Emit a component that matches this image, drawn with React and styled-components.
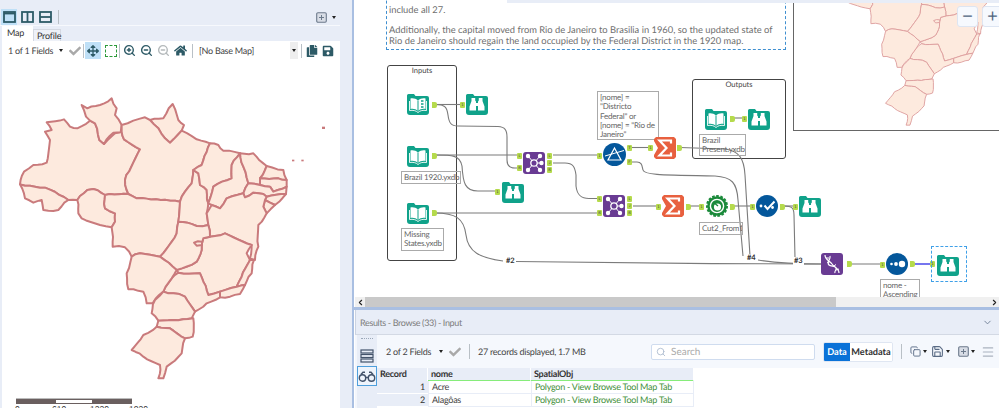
import React from "react";
import styled, { createGlobalStyle } from "styled-components";
import { FaArrowsAlt, FaHome, FaCopy, FaSave, FaCheck } from "react-icons/fa";
import { ZoomIn, ZoomOut, Search, ChevronDown, ChevronLeft, ChevronRight, Copy, Save, Menu } from "lucide-react";

const UI_FONT = `"Lato", "Noto Sans", "Liberation Sans", sans-serif`;
const CANVAS_X = 355;
const PANEL = "#e8edf7";
const ICON = "#2d5a66";
const TEAL = "#10a28a";
const PURPLE = "#693b93";
const BLUE = "#04579b";
const ORANGE = "#e8603f";

const Global = createGlobalStyle`
  html, body { margin: 0; padding: 0; background: #fff; overflow: hidden; }
  body { font-family: ${UI_FONT}; text-rendering: geometricPrecision; }
`;

const Page = styled.div`
  width: 999px;
  height: 408px;
  display: grid;
  grid-template-columns: 340px 12px 2px 1fr;
  overflow: hidden;
`;

/* left panel */
const LeftPanel = styled.div`
  background: ${PANEL};
  display: flex;
  flex-direction: column;
  height: 408px;
`;
const LayoutBar = styled.div`
  height: 26px;
  box-sizing: border-box;
  padding: 9px 3px 0 1px;
  display: flex;
  align-items: center;
  gap: 2px;
  border-bottom: 1px solid #f7f9fd;
`;
const LayoutButton = styled.div`
  width: 16px;
  height: 16px;
  display: flex;
  align-items: center;
  justify-content: center;
  background: ${p => (p.$active ? "#bfe0f7" : "transparent")};
`;
const BarSep = styled.div`
  width: 1px;
  height: ${p => p.$h || 14}px;
  background: #b9c0c6;
  margin: 0 ${p => p.$m ?? 3}px;
`;
const Spacer = styled.div`
  flex: 1;
`;
const Tabs = styled.div`
  height: 15px;
  display: flex;
  align-items: flex-end;
  padding-left: 2px;
`;
const Tab = styled.div`
  font-size: 9px;
  letter-spacing: -0.2px;
  color: #333;
  line-height: 1;
  box-sizing: border-box;
  height: ${p => (p.$active ? 15 : 12)}px;
  width: ${p => (p.$active ? 31 : 28)}px;
  padding: ${p => (p.$active ? "2px 0 0 5px" : "1px 0 0 3px")};
  background: ${p => (p.$active ? "#fff" : "#eef1f8")};
  border: ${p => (p.$active ? "none" : "1px solid #d4d9e2")};
  border-bottom: none;
`;
const MapPane = styled.div`
  flex: 1;
  margin-left: 2px;
  background: #fff;
  position: relative;
  overflow: hidden;
  min-height: 0;
`;
const MapBar = styled.div`
  height: 19px;
  display: flex;
  align-items: center;
  padding-left: 6px;
  font-size: 9px;
  letter-spacing: -0.25px;
  color: #444;
`;
const MapBarText = styled.span`
  white-space: nowrap;
  width: ${p => p.$w}px;
  margin-left: ${p => p.$left || 0}px;
`;
const Caret = styled.span`
  display: inline-block;
  width: 0;
  height: 0;
  border-left: 2.5px solid transparent;
  border-right: 2.5px solid transparent;
  border-top: 3px solid ${p => p.$color || "#222"};
  margin: ${p => p.$m || "0 5px"};
`;
const ToolButton = styled.div`
  width: ${p => p.$w || 15}px;
  height: 17px;
  display: flex;
  align-items: center;
  justify-content: center;
  margin-right: ${p => p.$gap ?? 1}px;
  background: ${p => (p.$active ? "#bfe0f7" : "transparent")};
`;
const DashBox = styled.div`
  width: 10px;
  height: 10px;
  border: 1.5px dashed #2c9a3a;
`;
const SelectTail = styled.div`
  width: 8px;
  height: 17px;
  background: #eee;
  display: flex;
  align-items: center;
  justify-content: center;
`;
const BigMap = styled.svg`
  display: block;
  margin: 30px 0 0 -2px;
`;
const ScaleBar = styled.div`
  position: absolute;
  left: 14px;
  top: 357px;
  width: 116px;
  height: 5px;
  display: grid;
  grid-template-columns: 1fr 1fr 1fr;
  border-top: 1px solid #bbb;
`;
const ScaleStep = styled.div`
  background: ${p => (p.$dark ? "#6a5f5f" : "#fff")};
  border: 1px solid #6a5f5f;
`;
const ScaleLabels = styled.div`
  position: absolute;
  left: 13px;
  top: 363px;
  width: 145px;
  font-family: "Liberation Sans", sans-serif;
  font-size: 8.5px;
  color: #333;
  display: grid;
  grid-template-columns: 37px 38px 39px 1fr;
`;

const Splitter = styled.div`
  background: ${PANEL};
`;
const SplitLine = styled.div`
  background: #a9bfe2;
`;

/* right side */
const RightSide = styled.div`
  display: flex;
  flex-direction: column;
  height: 408px;
  min-width: 0;
  padding-left: 1px;
`;
const Canvas = styled.div`
  position: relative;
  height: 297px;
  background: #fff;
  overflow: hidden;
`;
const Wires = styled.svg`
  position: absolute;
  left: 0;
  top: 0;
`;
const TopStrip = styled.div`
  position: absolute;
  left: ${507 - CANVAS_X}px;
  right: 0;
  top: 0;
  height: 3px;
  background: ${PANEL};
  z-index: 5;
`;
const NoteBox = styled.div`
  position: absolute;
  left: ${386 - CANVAS_X}px;
  top: -20px;
  width: 400px;
  height: 70px;
  box-sizing: border-box;
  border: 1px dashed #3f8fd0;
  background: #fff;
  padding: 23px 0 0 2px;
  font-size: 9.35px;
  line-height: 11px;
  color: #6f6f6f;
  white-space: nowrap;
`;
const NotePara = styled.p`
  margin: 0 0 9px;
`;
const MiniMap = styled.div`
  position: absolute;
  left: ${793 - CANVAS_X}px;
  top: -2px;
  width: 220px;
  height: 133px;
  box-sizing: border-box;
  border: 1.5px solid #666;
  background: #fff;
  overflow: hidden;
`;
const MiniSvg = styled.svg`
  position: absolute;
  left: -10px;
  top: -96px;
`;
const MapZoomBtn = styled.div`
  position: absolute;
  left: ${p => p.$x - CANVAS_X}px;
  top: 6px;
  width: 21px;
  height: 21px;
  box-sizing: border-box;
  border-radius: 3px;
  background: #f6f9fe;
  border: 1px solid #dde5f2;
  color: #50657f;
  font-family: "Liberation Sans", sans-serif;
  font-size: 18px;
  line-height: 18px;
  text-align: center;
  z-index: 4;
`;
const Container = styled.div`
  position: absolute;
  left: ${p => p.$x - CANVAS_X}px;
  top: ${p => p.$y}px;
  width: ${p => p.$w}px;
  height: ${p => p.$h}px;
  box-sizing: border-box;
  border: 1.5px solid #444;
  border-radius: 3px;
  font-size: 7.5px;
  color: #444;
  text-align: center;
  line-height: 10px;
`;
const Comment = styled.div`
  position: absolute;
  left: ${p => p.$x - CANVAS_X}px;
  top: ${p => p.$y}px;
  width: ${p => p.$w}px;
  height: ${p => p.$h}px;
  box-sizing: border-box;
  border: 1px solid #aaa;
  padding: 1px 2px;
  font-size: 8px;
  letter-spacing: -0.2px;
  line-height: 9.3px;
  color: #666;
  white-space: nowrap;
  overflow: hidden;
`;
const Tool = styled.svg`
  position: absolute;
  left: ${p => p.$x - CANVAS_X}px;
  top: ${p => p.$y}px;
`;
const Anchor = styled.div`
  position: absolute;
  left: ${p => p.$x - CANVAS_X}px;
  top: ${p => p.$y}px;
  width: 5px;
  height: 6px;
  background: #b5da4c;
  border-radius: ${p => (p.$out ? "0 2px 2px 0" : "1px")};
  font-size: 4px;
  line-height: 6px;
  text-align: center;
  color: #444;
  overflow: hidden;
`;
const WireLabel = styled.div`
  position: absolute;
  left: ${p => p.$x - CANVAS_X}px;
  top: ${p => p.$y}px;
  font-size: 7.5px;
  font-weight: 700;
  color: #333;
  background: #fff;
  line-height: 8px;
  padding: 0 1px;
`;
const Selection = styled.div`
  position: absolute;
  left: ${931 - CANVAS_X}px;
  top: 246px;
  width: 36px;
  height: 36px;
  box-sizing: border-box;
  border: 1px dashed #3fa0e8;
`;
const Scroller = styled.div`
  height: 10px;
  display: grid;
  grid-template-columns: 10px 471px 1fr 10px;
  background: #f0f0f0;
`;
const ScrollEnd = styled.div`
  display: flex;
  align-items: center;
  justify-content: center;
  color: #222;
`;
const ScrollThumb = styled.div`
  background: #c9c9c9;
`;
const BlueRule = styled.div`
  height: 3px;
  margin-left: -1px;
  background: #a9bfe2;
`;

/* results */
const Results = styled.div`
  flex: 1;
  background: ${PANEL};
  display: flex;
  flex-direction: column;
  min-height: 0;
  margin-left: -1px;
  border-left: 1px solid #fff;
`;
const ResultsHead = styled.div`
  height: 24px;
  display: flex;
  align-items: center;
  justify-content: space-between;
  padding: 0 6px 0 4px;
  font-size: 9px;
  letter-spacing: -0.35px;
  color: #7c7c7c;
  border-bottom: 1px solid #d3d9e4;
  border-left: 1px solid #cbd3e2;
  flex: none;
`;
const ResultsBody = styled.div`
  flex: 1;
  background: #fff;
  display: flex;
  min-height: 0;
`;
const SideRail = styled.div`
  width: 22px;
  flex: none;
  background: #f3f6fc;
  padding-left: 2px;
  box-sizing: border-box;
  display: flex;
  flex-direction: column;
  align-items: stretch;
`;
const RailInner = styled.div`
  width: 20px;
  background: ${PANEL};
  flex: 1;
  display: flex;
  flex-direction: column;
  align-items: center;
`;
const Grip = styled.div`
  height: 6px;
  margin-top: 3px;
  width: 12px;
  border-top: 1px dotted #9aa7b8;
`;
const RailButton = styled.div`
  width: 20px;
  height: ${p => (p.$selected ? 20 : 21)}px;
  box-sizing: border-box;
  display: flex;
  align-items: center;
  justify-content: center;
  border: ${p => (p.$selected ? "1px solid #4f9fdc" : "none")};
  background: ${p => (p.$selected ? "#eef4fc" : "transparent")};
`;
const ResultsMain = styled.div`
  flex: 1;
  min-width: 0;
  display: flex;
  flex-direction: column;
`;
const ResultsBar = styled.div`
  height: 33px;
  flex: none;
  background: #f5f8fd;
  display: flex;
  align-items: center;
  padding-left: 9px;
  font-size: 9px;
  letter-spacing: -0.25px;
  color: #444;
`;
const BarLabel = styled.span`
  white-space: nowrap;
  width: ${p => p.$w}px;
`;
const SearchBox = styled.div`
  width: 164px;
  height: 16px;
  box-sizing: border-box;
  display: flex;
  align-items: center;
  gap: 5px;
  padding-left: 4px;
  margin-right: 8px;
  background: #fff;
  border: 1px solid #cfdcef;
  border-radius: 2px;
  color: #aaa;
  font-size: 10px;
  letter-spacing: 0;
`;
const ToggleGroup = styled.div`
  display: flex;
  height: 18px;
  border-radius: 2px;
  overflow: hidden;
  background: #fff;
  border: 1px solid #dfe6f2;
`;
const Toggle = styled.div`
  width: ${p => p.$w}px;
  display: flex;
  align-items: center;
  justify-content: center;
  font-size: 9.2px;
  letter-spacing: 0;
  font-weight: 700;
  background: ${p => (p.$on ? "#0a72d8" : "#fff")};
  color: ${p => (p.$on ? "#fff" : "#333")};
`;
const BarIcons = styled.div`
  display: flex;
  align-items: center;
  color: #5a6b85;
`;
const DataGrid = styled.div`
  display: grid;
  grid-template-columns: 51px 103px 163px;
  grid-auto-rows: 13px;
  font-size: 9px;
  letter-spacing: -0.25px;
  line-height: 12px;
  width: 317px;
`;
const HeadCell = styled.div`
  background: ${PANEL};
  font-weight: 700;
  color: #333;
  padding-left: 3px;
  height: 14px;
  box-sizing: border-box;
  border-right: 1px solid #fff;
  border-bottom: ${p => (p.$marked ? "2px solid #86ec7a" : "none")};
`;
const RowNum = styled.div`
  background: ${PANEL};
  text-align: right;
  padding-right: 3px;
  color: #333;
  border-bottom: 1px solid #fff;
`;
const Cell = styled.div`
  background: #fff;
  padding-left: 3px;
  color: ${p => (p.$spatial ? "#3f8f3a" : "#444")};
  box-sizing: border-box;
  border-left: 1px solid ${PANEL};
  border-bottom: 1px solid ${PANEL};
  border-right: ${p => (p.$spatial ? `1px solid ${PANEL}` : "none")};
  white-space: nowrap;
  overflow: hidden;
`;

/* Map, traced by state, in the 1035x954 space of the left pane */
const STATES = [
  "140,97 192,88 210,110 232,115 270,92 285,100 298,150 312,162 345,130 365,125 372,148 420,178 375,270 385,312 315,315 280,297 262,300 232,330 205,330 135,293 60,283 72,245 100,225 140,218 150,150 135,125 155,120",
  "245,45 262,55 300,45 335,25 350,55 345,75 365,105 362,127 340,128 312,162 298,150 285,100 270,92 258,80",
  "450,90 490,85 518,42 535,90 552,105 545,122 510,158 495,145 475,115",
  "365,105 400,92 435,82 450,90 475,115 495,145 510,158 545,122 590,148 630,160 605,225 580,240 575,280 555,305 540,335 410,325 385,312 375,270 420,178 372,148 365,125",
  "60,283 135,293 205,330 175,360 130,360 125,330 100,338 75,325",
  "232,330 262,300 280,297 315,315 315,355 345,370 345,395 335,412 300,405 245,385 235,370",
  "315,315 385,312 410,325 540,335 535,395 530,430 480,500 465,497 420,490 395,500 375,472 338,470 335,412 345,395 345,370 315,355",
  "580,240 595,250 600,285 620,300 625,340 620,370 625,405 590,408 562,398 535,395 540,335 555,305 575,280",
  "630,160 655,165 670,182 720,190 695,225 695,265 640,290 632,320 625,340 620,300 600,285 595,250 580,240 605,225",
  "720,190 730,230 745,280 730,310 680,325 660,355 635,345 625,340 632,320 640,290 695,265 695,225",
  "720,190 760,190 800,228 780,265 780,285 745,280 730,230",
  "800,228 850,240 860,270 835,265 780,265",
  "780,265 835,265 860,270 860,290 820,305 810,290 780,285",
  "745,280 780,285 810,290 820,305 860,290 858,312 800,320 790,312 760,308 735,322 730,310",
  "800,320 858,312 825,345 795,330",
  "795,330 825,345 800,370 790,350",
  "730,310 735,322 760,308 790,312 800,320 795,330 790,350 800,370 775,405 775,470 765,510 750,505 755,465 675,430 630,440 625,405 620,370 635,345 660,355 680,325",
  "630,440 675,430 755,465 740,490 750,510 725,560 710,590 660,605 625,615 610,575 600,550 535,548 530,540 590,515 605,480 610,445",
  "535,395 562,398 590,408 625,405 630,440 610,445 605,480 590,515 530,540 480,500 530,430",
  "582,458 606,455 606,465 590,467",
  "750,510 762,510 755,550 735,585 710,590 725,560",
  "710,590 735,585 720,612 690,620 660,622 660,605",
  "535,548 600,550 610,575 625,615 660,605 660,622 620,640 585,665 555,620 520,610 490,605 515,565",
  "395,500 420,490 465,497 480,500 530,540 515,565 490,605 458,640 440,640 430,605 385,598 380,550",
  "490,605 520,610 555,620 585,665 575,685 520,690 475,692 455,670 465,630",
  "475,692 520,690 580,685 578,740 555,745 510,715 470,710",
  "470,710 510,715 555,745 545,790 500,830 490,865 475,865 480,825 430,800 395,780 430,735"
];

// adds small wobble to each border, the same on both states that share it
const roughen = points => {
  const pts = points.split(" ").map(p => p.split(",").map(Number));
  const out = [];
  pts.forEach((a, i) => {
    const b = pts[(i + 1) % pts.length];
    const forward = a[0] < b[0] || (a[0] === b[0] && a[1] < b[1]);
    const [s, e] = forward ? [a, b] : [b, a];
    const len = Math.hypot(e[0] - s[0], e[1] - s[1]);
    const n = Math.max(1, Math.round(len / 15));
    const mids = [];
    for (let k = 1; k < n; k++) {
      const r = (Math.sin(s[0] * 12.9898 + e[1] * 78.233 + k * 37.7) * 43758.5453) % 1;
      const x = s[0] + ((e[0] - s[0]) * k) / n - ((e[1] - s[1]) / len) * r * 3;
      const y = s[1] + ((e[1] - s[1]) * k) / n + ((e[0] - s[0]) / len) * r * 3;
      mids.push(`${x.toFixed(1)},${y.toFixed(1)}`);
    }
    out.push(a.join(","), ...(forward ? mids : mids.reverse()));
  });
  return out.join(" ");
};
const ROUGH_STATES = STATES.map(roughen);

const MapShapes = ({ stroke, width }) => (
  <g fill="#fdeade" stroke={stroke} strokeWidth={width} strokeLinejoin="round">
    {ROUGH_STATES.map((points, i) => (
      <polygon key={i} points={points} />
    ))}
  </g>
);

const WIRES = [
  "M435 104.5H460",
  "M435 104.5C446 104.5 447 108 448 115C449 123 451 126 458 126L498 126.5C505 127 507 130 507 137L507 160C507 166 510 168 515 168H520",
  "M435 155H520",
  "M435 155C452 155 460 155 462 166C463 183 465 191 478 191H495",
  "M435 213H598",
  "M435 213C455 213 464 218 466 235C468 252 480 258 503 261",
  "M516 261.5C600 263 720 264 821 264",
  "M553 155H598",
  "M553 163H565C573 163 575 167 576 175L576 186C577 195 581 198.5 589 198.5H598",
  "M630 147.5H650",
  "M630 162H637C642 162 642 166 643 170C644 175 660 175 715 176C732 177 737 183 738 200L743 256",
  "M680 147.5L725 149C739 151 744 158 745 175L750 256",
  "M758 260C770 262 790 264 821 264",
  "M633 206H657",
  "M688 206H700",
  "M731 206H750",
  "M782 206H795",
  "M784 206C792 206 794 208 794 215L795 258",
  "M847 264H880",
  "M733 118H745"
];

const Book = ({ lines }) => (
  <>
    <path d="M0 2.5Q0 1 1.5 1H7L8.5 3H20Q22 3 22 5V19Q22 22 19 22H3Q0 22 0 19Z" fill={TEAL} />
    <path d="M11 7.5C9 5.5 6 5 3.5 5.5V16C6 15.5 9 16 11 18C13 16 16 15.5 18.5 16V5.5C16 5 13 5.5 11 7.5Z" fill="#fff" />
    <path d="M11 7.5V18" stroke={TEAL} strokeWidth="1" />
    <path d="M2.5 8V17.5C6 17 9 17.5 11 19.5C13 17.5 16 17 19.5 17.5V8" fill="none" stroke="#fff" strokeWidth=".9" />
    {lines && <path d="M14 8h2.5M14 11h2.5M14 14h2.5" stroke={TEAL} strokeWidth="1.4" />}
  </>
);

const Browse = () => (
  <>
    <path d="M0 2.5Q0 1 1.5 1H7L8.5 3H20Q22 3 22 5V19Q22 22 19 22H3Q0 22 0 19Z" fill={TEAL} />
    <path d="M5.5 5H9.2V7.5L10 8.5V17.5H3.5V13.5L5.5 8ZM12.8 5H16.5V8L18.5 13.5V17.5H12V8.5L12.8 7.5Z" fill="#fff" />
    <path d="M10 10H12V13H10Z" fill="#fff" />
  </>
);

const Join = () => (
  <>
    <rect width="22" height="22" rx="3" fill={PURPLE} />
    <path d="M5 4L11 11L17 4M11 11H18.5M5 18L11 11L17 18" stroke="#fff" strokeWidth="1" fill="none" />
    <circle cx="11" cy="11" r="3.2" fill={PURPLE} stroke="#fff" strokeWidth="1.3" />
    {[[5, 4, 2.2], [17, 4, 2.2], [18.5, 11, 2.2], [5, 18, 2.2], [17, 18, 2.2]].map(([cx, cy, r]) => (
      <circle key={`${cx}-${cy}`} cx={cx} cy={cy} r={r} fill="#fff" />
    ))}
  </>
);

const Filter = () => (
  <>
    <circle cx="11.5" cy="11.5" r="11.5" fill={BLUE} />
    <path d="M11.5 5L18 17H5Z" fill="none" stroke="#fff" strokeWidth="1.2" />
    <path d="M2 13L21 7.5" stroke="#fff" strokeWidth="1" />
  </>
);

const Sigma = () => (
  <>
    <polygon points="2,0 20,0 22,2 22,20 20,22 2,22 0,20 0,18 4,11 0,4 0,2" fill={ORANGE} />
    <path d="M17 6.5V3.5H5.5L12.5 11L5.5 18.5H17V15.5" fill="none" stroke="#fff" strokeWidth="2.2" />
  </>
);

const Badge = () => (
  <>
    <circle cx="11" cy="11" r="9.8" fill="#1b8a3b" stroke="#1b8a3b" strokeWidth="2.4" strokeDasharray="2.6 1.5" />
    <circle cx="11" cy="11" r="6.6" fill="#1b8a3b" stroke="#fff" strokeWidth="1.4" />
    <circle cx="11.5" cy="12" r="3.6" fill="#fff" />
    <path d="M7 7L12 11" stroke="#1b8a3b" strokeWidth="1.4" />
  </>
);

const Dotted = ({ check }) => (
  <>
    <circle cx="11" cy="11" r="11" fill={BLUE} />
    {check ? (
      <>
        <circle cx="5" cy="11" r="1.4" fill="#fff" />
        <path d="M8.5 10.5L11.5 14L18.5 6.5" fill="none" stroke="#fff" strokeWidth="2" />
        <circle cx="16.5" cy="12.5" r="1.4" fill="#fff" />
      </>
    ) : (
      <>
        <circle cx="5.5" cy="11" r="1.3" fill="#fff" />
        <circle cx="10" cy="11" r="1.9" fill="#fff" />
        <circle cx="16" cy="11" r="3.2" fill="#fff" />
      </>
    )}
  </>
);

const Dna = () => (
  <>
    <rect width="22" height="22" rx="3" fill={PURPLE} />
    <path d="M4 2C4 7 9 8 11 11C13 14 18 15 18 20M9 3C10 7 5 9 8 12C10 14 14 12 15 15C16 17 13 18 14 20" fill="none" stroke="#fff" strokeWidth="1.2" />
    <path d="M5 5L8 5M6 9.5L9 8.5M13 13L15 11.5M15 17L18 16" stroke="#fff" strokeWidth="1" />
  </>
);

const ICONS = { book: Book, browse: Browse, join: Join, filter: Filter, sigma: Sigma, badge: Badge, dotted: Dotted, dna: Dna };

const TOOLS = [
  { kind: "book", x: 407, y: 93, lines: true },
  { kind: "browse", x: 466, y: 93 },
  { kind: "book", x: 407, y: 145 },
  { kind: "book", x: 407, y: 202 },
  { kind: "join", x: 523, y: 152 },
  { kind: "browse", x: 502, y: 181 },
  { kind: "filter", x: 603, y: 143, size: 23 },
  { kind: "sigma", x: 654, y: 137 },
  { kind: "join", x: 603, y: 195 },
  { kind: "sigma", x: 662, y: 195 },
  { kind: "badge", x: 706, y: 195 },
  { kind: "dotted", x: 756, y: 195, check: true },
  { kind: "browse", x: 799, y: 195 },
  { kind: "book", x: 705, y: 108 },
  { kind: "browse", x: 748, y: 108 },
  { kind: "dna", x: 821, y: 253 },
  { kind: "dotted", x: 886, y: 253 },
  { kind: "browse", x: 937, y: 254 }
];

const ANCHORS = [
  { x: 432, y: 102, out: 1 }, { x: 460, y: 102, t: "1" },
  { x: 432, y: 153, out: 1 }, { x: 432, y: 210, out: 1 },
  { x: 495, y: 189, t: "1" },
  { x: 517, y: 153, t: "L" }, { x: 517, y: 165, t: "R" },
  { x: 547, y: 153, t: "L" }, { x: 547, y: 160, t: "J" }, { x: 547, y: 167, t: "R" },
  { x: 597, y: 153, t: "1" },
  { x: 627, y: 145, t: "T" }, { x: 627, y: 159, t: "F" },
  { x: 648, y: 145, t: "1" }, { x: 677, y: 145, out: 1 },
  { x: 597, y: 196, t: "L" }, { x: 597, y: 210, t: "R" },
  { x: 627, y: 196, t: "L" }, { x: 627, y: 203, t: "J" }, { x: 627, y: 210, t: "R" },
  { x: 656, y: 204, t: "1" }, { x: 686, y: 204, out: 1 },
  { x: 699, y: 204, t: "1" }, { x: 730, y: 204, out: 1 },
  { x: 750, y: 204, t: "1" }, { x: 780, y: 204, out: 1 },
  { x: 793, y: 204, t: "1" },
  { x: 730, y: 116, out: 1 }, { x: 742, y: 116, t: "1" },
  { x: 847, y: 261, out: 1 }, { x: 880, y: 262, t: "1" },
  { x: 910, y: 261, out: 1 }, { x: 930, y: 261, t: "1" }
];

const PanelIcon = ({ split }) => (
  <svg width="13" height="12" viewBox="0 0 13 12" fill="none" stroke={ICON} strokeWidth="1.8">
    <rect x="1" y="1" width="11" height="10" />
    {split === "v" && <path d="M6.5 1V11" />}
    {split === "h" && <path d="M1 6H12" />}
    {split === "none" && <path d="M1 2.5H12" />}
  </svg>
);

const PlusBox = () => (
  <svg width="11" height="11" viewBox="0 0 11 11">
    <rect x=".7" y=".7" width="9.6" height="9.6" rx="1.2" fill="#d8dde6" stroke="#6c7a8c" strokeWidth="1.1" />
    <path d="M5.5 3V8M3 5.5H8" stroke="#6c7a8c" strokeWidth="1" />
  </svg>
);

const Binoculars = () => (
  <svg width="18" height="11" viewBox="0 0 18 11" fill="none" stroke="#42526a" strokeWidth="1.4">
    <circle cx="4.5" cy="7" r="3.2" />
    <circle cx="13.5" cy="7" r="3.2" />
    <path d="M7.7 6.5H10.3M3 3.5L5 1.2H7M15 3.5L13 1.2H11" />
  </svg>
);

const RowsIcon = () => (
  <svg width="14" height="14" viewBox="0 0 14 14" fill="none" stroke="#42526a" strokeWidth="1.2">
    <rect x="1" y="1" width="12" height="3" />
    <rect x="1" y="5.5" width="12" height="3" />
    <rect x="1" y="10" width="12" height="3" />
  </svg>
);

export default function App() {
  return (
    <Page>
      <Global />
      <LeftPanel>
        <LayoutBar>
          <LayoutButton $active><PanelIcon split="none" /></LayoutButton>
          <LayoutButton><PanelIcon split="v" /></LayoutButton>
          <LayoutButton><PanelIcon split="h" /></LayoutButton>
          <BarSep />
          <Spacer />
          <PlusBox />
          <Caret $m="0 1px 0 3px" />
        </LayoutBar>
        <Tabs>
          <Tab $active>Map</Tab>
          <Tab>Profile</Tab>
        </Tabs>
        <MapPane>
          <MapBar>
            <MapBarText $w={46}>1 of 1 Fields</MapBarText>
            <Caret $m="0 5px 0 5px" />
            <ToolButton $w={14} $gap={0}><FaCheck size={12} color="#a9a9a9" /></ToolButton>
            <BarSep $m={1} />
            <ToolButton $active $w={16} $gap={3}><FaArrowsAlt size={12} color={ICON} /></ToolButton>
            <ToolButton $w={13} $gap={0}><DashBox /></ToolButton>
            <BarSep $m={2} />
            <ToolButton $gap={2}><ZoomIn size={13} strokeWidth={2.6} color={ICON} /></ToolButton>
            <ToolButton $gap={2}><ZoomOut size={13} strokeWidth={2.6} color={ICON} /></ToolButton>
            <ToolButton $gap={2}><ZoomOut size={13} strokeWidth={2.6} color="#b4b9bb" /></ToolButton>
            <ToolButton $gap={1}><FaHome size={13} color={ICON} /></ToolButton>
            <BarSep $m={3} />
            <MapBarText $w={91} $left={3}>[No Base Map]</MapBarText>
            <SelectTail><Caret $m="0" /></SelectTail>
            <BarSep $m={3} />
            <ToolButton $w={13} $gap={3}><FaCopy size={12} color={ICON} /></ToolButton>
            <ToolButton $w={13} $gap={0}><FaSave size={12} color={ICON} /></ToolButton>
          </MapBar>
          <BigMap width="345" height="318" viewBox="0 0 1035 954">
            <MapShapes stroke="#c97a7c" width={6} />
            <g fill="#c97a7c">
              <rect x="966" y="110" width="9" height="7" />
              <rect x="876" y="209" width="7" height="5" />
              <rect x="904" y="209" width="7" height="5" />
            </g>
          </BigMap>
          <ScaleBar>
            <ScaleStep $dark />
            <ScaleStep />
            <ScaleStep $dark />
          </ScaleBar>
          <ScaleLabels>
            <span>0</span>
            <span>610</span>
            <span>1220</span>
            <span>1830 km</span>
          </ScaleLabels>
        </MapPane>
      </LeftPanel>
      <Splitter />
      <SplitLine />
      <RightSide>
        <Canvas>
          <TopStrip />
          <NoteBox>
            <NotePara>include all 27.</NotePara>
            <NotePara>
              Additionally, the capital moved from Rio de Janeiro to Brasilia in 1960, so the updated state of
              <br />
              Rio de Janeiro should regain the land occupied by the Federal District in the 1920 map.
            </NotePara>
          </NoteBox>
          <MiniMap>
            <MiniSvg width="266" height="245" viewBox="0 0 1035 954">
              <MapShapes stroke="#dc9c9c" width={3.5} />
            </MiniSvg>
          </MiniMap>
          <MapZoomBtn $x={957}>−</MapZoomBtn>
          <MapZoomBtn $x={982}>+</MapZoomBtn>
          <Container $x={387} $y={65} $w={70} $h={196}>Inputs</Container>
          <Container $x={692} $y={79} $w={94} $h={80}>Outputs</Container>
          <Wires width="644" height="297" viewBox={`${CANVAS_X} 0 644 297`} fill="none">
            {WIRES.map((d, i) => (
              <path key={i} d={d} stroke="#7b7b7b" strokeWidth="1.1" />
            ))}
            <path d="M914 264H931" stroke="#3b3be8" strokeWidth="1.4" />
          </Wires>
          <Comment $x={401} $y={171} $w={60} $h={13}>Brazil 1920.yxdb</Comment>
          <Comment $x={401} $y={228} $w={43} $h={23}>Missing<br />States.yxdb</Comment>
          <Comment $x={597} $y={91} $w={62} $h={49}>
            [nome] =<br />"Districto<br />Federal" or<br />[nome] = "Rio de<br />Janeiro"
          </Comment>
          <Comment $x={699} $y={134} $w={47} $h={22}>Brazil<br />Present.yxdb</Comment>
          <Comment $x={699} $y={222} $w={44} $h={13}>Cut2_From1</Comment>
          <Comment $x={880} $y={279} $w={40} $h={24}>nome -<br />Ascending</Comment>
          {TOOLS.map(({ kind, x, y, size = 22, ...rest }) => {
            const Icon = ICONS[kind];
            return (
              <Tool key={`${kind}-${x}-${y}`} $x={x} $y={y} width={size} height={size} viewBox={`0 0 ${size} ${size}`}>
                <Icon {...rest} />
              </Tool>
            );
          })}
          {ANCHORS.map(({ x, y, t, out }) => (
            <Anchor key={`${x}-${y}`} $x={x} $y={y} $out={out}>{t}</Anchor>
          ))}
          <WireLabel $x={505} $y={257}>#2</WireLabel>
          <WireLabel $x={746} $y={254}>#4</WireLabel>
          <WireLabel $x={793} $y={257}>#3</WireLabel>
          <Selection />
        </Canvas>
        <Scroller>
          <ScrollEnd><ChevronLeft size={9} strokeWidth={3} /></ScrollEnd>
          <ScrollThumb />
          <div />
          <ScrollEnd><ChevronRight size={9} strokeWidth={3} /></ScrollEnd>
        </Scroller>
        <BlueRule />
        <Results>
          <ResultsHead>
            <span>Results - Browse (33) - Input</span>
            <ChevronDown size={11} color="#6f7f95" />
          </ResultsHead>
          <ResultsBody>
            <SideRail>
              <RailInner>
                <Grip />
                <RailButton><RowsIcon /></RailButton>
                <RailButton $selected><Binoculars /></RailButton>
              </RailInner>
            </SideRail>
            <ResultsMain>
              <ResultsBar>
                <BarLabel $w={47}>2 of 2 Fields</BarLabel>
                <Caret $m="0 6px 0 6px" />
                <FaCheck size={12} color="#a9a9a9" />
                <BarSep $m={8} $h={15} />
                <BarLabel $w={173}>27 records displayed, 1.7 MB</BarLabel>
                <SearchBox>
                  <Search size={10} color="#a8b8cc" />
                  Search
                </SearchBox>
                <ToggleGroup>
                  <Toggle $on $w={26}>Data</Toggle>
                  <Toggle $w={42}>Metadata</Toggle>
                </ToggleGroup>
                <BarSep $m={8} $h={15} />
                <BarIcons>
                  <Copy size={11} />
                  <Caret $m="0 4px 0 2px" />
                  <Save size={13} />
                  <Caret $m="0 8px 0 2px" />
                  <PlusBox />
                  <Caret $m="0 6px 0 2px" />
                  <Menu size={14} color="#aab2bf" />
                </BarIcons>
              </ResultsBar>
              <DataGrid>
                <HeadCell>Record</HeadCell>
                <HeadCell $marked>nome</HeadCell>
                <HeadCell $marked>SpatialObj</HeadCell>
                <RowNum>1</RowNum>
                <Cell>Acre</Cell>
                <Cell $spatial>Polygon - View Browse Tool Map Tab</Cell>
                <RowNum>2</RowNum>
                <Cell>Alagôas</Cell>
                <Cell $spatial>Polygon - View Browse Tool Map Tab</Cell>
              </DataGrid>
            </ResultsMain>
          </ResultsBody>
        </Results>
      </RightSide>
    </Page>
  );
}
